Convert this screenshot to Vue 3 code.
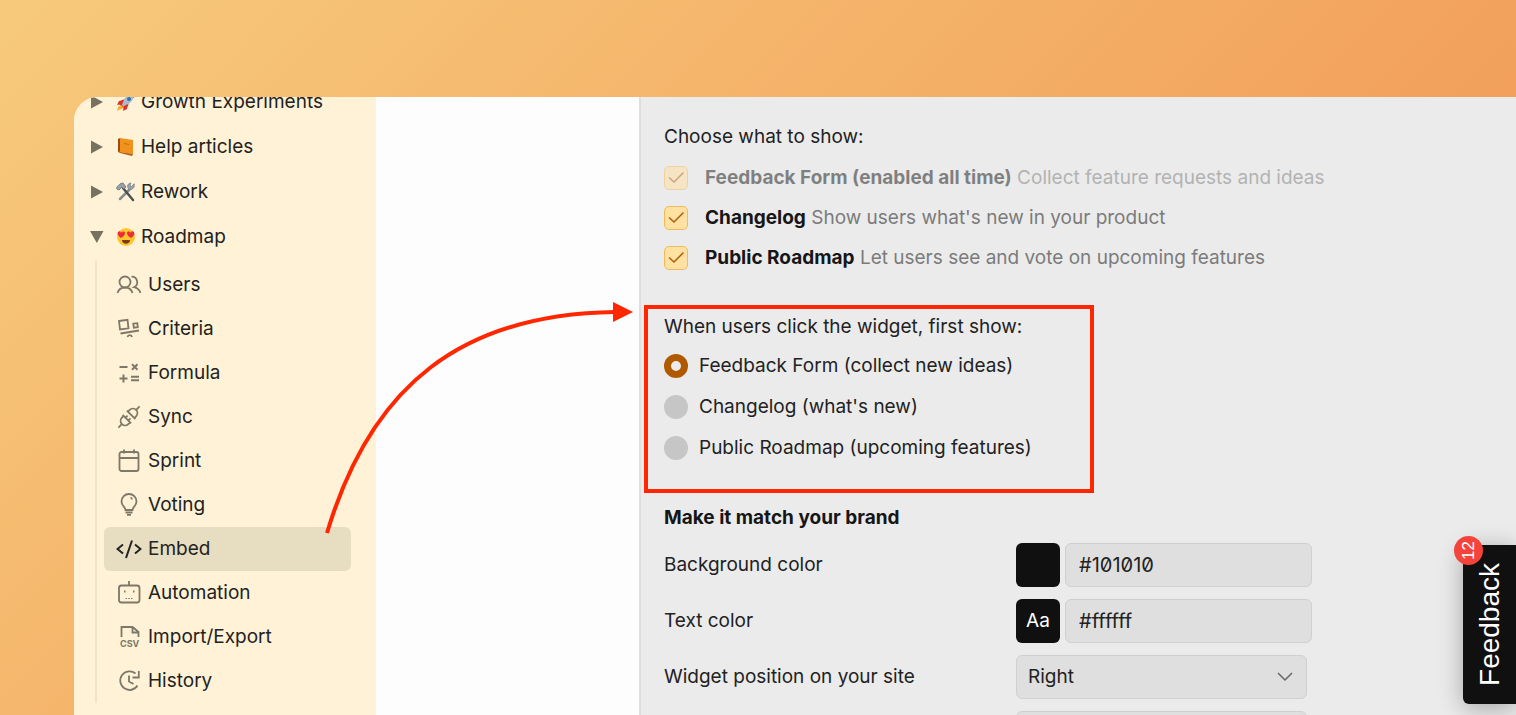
<script setup>
import { ref } from 'vue'

const spaces = [
  { name: 'Growth Experiments', icon: 'rocket' },
  { name: 'Help articles', icon: 'book' },
  { name: 'Rework', icon: 'tools' },
  { name: 'Roadmap', icon: 'eyes', open: true }
]
const pages = [
  { name: 'Users', icon: 'users' },
  { name: 'Criteria', icon: 'criteria' },
  { name: 'Formula', icon: 'formula' },
  { name: 'Sync', icon: 'sync' },
  { name: 'Sprint', icon: 'sprint' },
  { name: 'Voting', icon: 'voting' },
  { name: 'Embed', icon: 'embed', active: true },
  { name: 'Automation', icon: 'automation' },
  { name: 'Import/Export', icon: 'csv' },
  { name: 'History', icon: 'history' }
]
const sections = ref([
  { name: 'Feedback Form (enabled all time)', note: 'Collect feature requests and ideas', on: true, locked: true },
  { name: 'Changelog', note: "Show users what's new in your product", on: true },
  { name: 'Public Roadmap', note: 'Let users see and vote on upcoming features', on: true }
])
const starts = ['Feedback Form (collect new ideas)', "Changelog (what's new)", 'Public Roadmap (upcoming features)']
const start = ref(starts[0])
const background = ref('#101010')
const textColor = ref('#ffffff')
const position = ref('Right')
</script>

<template>
  <div class="page">
    <div class="window">
      <nav class="sidebar">
        <a v-for="s in spaces" :key="s.name" href="#" class="space">
          <svg class="caret" viewBox="0 0 14 14">
            <path v-if="s.open" d="M0 1h13.500L6.800 13z" />
            <path v-else d="M1 .5v13L13 7z" />
          </svg>
          <svg class="emoji" viewBox="0 0 20 20">
            <g v-if="s.icon === 'rocket'">
              <path d="M3 12l3-4 4-1 3 3-1 4-4 3z" fill="#d8322a" />
              <path d="M6 13C7 6 12 2 19 1c-1 7-5 11-11 14z" fill="#a9bccb" />
              <path d="M14 2l5-1-1 5z" fill="#e0382c" />
              <path d="M8 8L3 9l-2 4 5-1zM12 12l-1 5-4 2 1-5z" fill="#d8322a" />
              <circle cx="13" cy="7" r="2" fill="#2a72b8" />
              <path d="M5 13l3 3-3 1-4 2 1-4z" fill="#fcae2c" />
            </g>
            <g v-else-if="s.icon === 'book'">
              <path d="M2 2l2-1v15l-2-1z" fill="#9b4c12" />
              <path d="M3 15l12 3 2-1-12-3z" fill="#efe3cf" />
              <path d="M4 1l13 2v14L4 15z" fill="#f0921b" />
              <path d="M4 15v1l12 3 1-2z" fill="#b35a10" />
              <path d="M8 6l5 1v1L8 7z" fill="#c96d10" />
            </g>
            <g v-else-if="s.icon === 'tools'" fill="none" stroke-linecap="round">
              <path d="M4 17L14 7" stroke="#858b93" stroke-width="2.500" />
              <path d="M18 2l-3 3-1-2 1-2c-3 0-4 3-3 5s5 2 6-1z" fill="#9da3aa" stroke="#858b93" />
              <path d="M7 6l10 12" stroke="#4c5057" stroke-width="2.500" />
              <path d="M1 7l2 1 3-3 2 2 2-2-3-4C4 1 3 3 1 5z" fill="#9aa0a8" stroke="#777d85" />
            </g>
            <g v-else>
              <circle cx="10" cy="10" r="9" fill="#fdc62f" />
              <path d="M6 13h8c0 5-8 5-8 0z" fill="#7a3a12" />
              <path d="M5 11C2 9 1 7 2 5c1-1 3-1 3 1 1-2 4-2 4 0 0 2-2 4-4 5zM15 11c-2-1-4-3-4-5 0-2 3-2 4 0 0-2 2-2 3-1 1 2 0 4-3 6z" fill="#ee2b3b" />
            </g>
          </svg>
          <span>{{ s.name }}</span>
        </a>
        <div class="pages">
          <a v-for="p in pages" :key="p.name" href="#" class="entry" :class="{ active: p.active }">
            <svg class="icon" viewBox="0 0 26 26">
              <g v-if="p.icon === 'users'">
                <circle cx="9" cy="10" r="5.500" />
                <path d="M1.500 21c1-3.500 4-5.500 7.500-5.500s6.500 2 7.500 5.500M15.500 4.700a5.500 5.500 0 0 1 2.500 10.500c3.500.8 5.500 2.800 6.500 5.800" />
              </g>
              <g v-else-if="p.icon === 'criteria'">
                <path d="M3 5l8.500-1.200 1 8.500-8.500 1.200zM17.300 7.700l4-.5.500 4-4 .5zM4.500 17.500l18.500-3M11.500 21c.5-2.500 4-2.500 4.500 0" />
              </g>
              <g v-else-if="p.icon === 'formula'" class="bold">
                <path d="M3.500 7h8M16 4.200l5.500 5.500m0-5.500L16 9.700M3.500 18.500h8M7.500 14.500v8M15 16.800h8M15 20.200h8" />
              </g>
              <g v-else-if="p.icon === 'sync'">
                <path
                  transform="rotate(-45 13 13)"
                  d="M-2 13h4.500M10 7v12M10 8.500H7.500a4.500 4.500 0 0 0 0 9H10M10 11h3M10 15h3M28 13h-4.500M16 7v12M16 8.500h2.500a4.500 4.500 0 0 1 0 9H16"
                />
              </g>
              <g v-else-if="p.icon === 'sprint'">
                <rect x="3.500" y="4" width="19" height="19" rx="2" /><path d="M3.500 10h19M8 1.500v4M18 1.500v4" />
              </g>
              <g v-else-if="p.icon === 'voting'">
                <path d="M9.500 18c0-3-4-4-4-8.500a7.500 7.500 0 0 1 15 0c0 4.500-4 5.500-4 8.500zM9.500 20.500h7M11 22.800h4M14.500 5.500a2 2 0 0 1 1.500 2" />
              </g>
              <g v-else-if="p.icon === 'embed'">
                <path d="M7 8.500L1.500 13 7 17.500M19 8.500l5.500 4.500-5.500 4.500M16 4.500L10 22" />
              </g>
              <g v-else-if="p.icon === 'automation'">
                <rect x="3" y="5.500" width="20.500" height="17" rx="2.500" /><path d="M13 1v4.500M8 11.500h1.500M17 11.500h1.500" />
                <path class="fine" d="M9.500 18.500H11M12.300 18.500h1.500M15 18.500h1.500" />
              </g>
              <g v-else-if="p.icon === 'csv'">
                <path d="M5.500 13V3h11l6 5v5M16.500 3v5.500h6" />
                <text x="4" y="23">CSV</text>
              </g>
              <g v-else>
                <path d="M19.500 5.500a9.300 9.300 0 1 0 2 12M22.800 3v6.500h-6.300M13 7.500v6l4.500 2.500" />
              </g>
            </svg>
            <span>{{ p.name }}</span>
          </a>
        </div>
      </nav>

      <div class="gutter"></div>

      <main class="settings">
        <p class="line">Choose what to show:</p>
        <label v-for="s in sections" :key="s.name" class="check" :class="{ locked: s.locked }">
          <span class="tick">
            <input v-model="s.on" type="checkbox" :disabled="s.locked" />
            <svg v-if="s.on" viewBox="0 0 24 24"><path d="M5 11.500l5 4.500 9.500-9.500" /></svg>
          </span>
          <span><b>{{ s.name }}</b> <span class="note">{{ s.note }}</span></span>
        </label>

        <div class="highlight" role="radiogroup" aria-labelledby="first">
          <p id="first" class="question">When users click the widget, first show:</p>
          <label v-for="s in starts" :key="s" class="choice">
            <input v-model="start" type="radio" name="start" :value="s" />
            <span>{{ s }}</span>
          </label>
        </div>

        <h2>Make it match your brand</h2>
        <div class="field">
          <label for="bg">Background color</label>
          <span class="swatch"></span>
          <input id="bg" v-model="background" type="text" />
        </div>
        <div class="field">
          <label for="fg">Text color</label>
          <span class="swatch">Aa</span>
          <input id="fg" v-model="textColor" type="text" />
        </div>
        <div class="field">
          <label for="position">Widget position on your site</label>
          <span class="select">
            <select id="position" v-model="position"><option>Right</option><option>Left</option></select>
            <svg viewBox="0 0 16 10"><path d="M1 1l7 7 7-7" /></svg>
          </span>
        </div>
        <div class="field">
          <span class="label"></span>
          <span class="select"><select aria-label="Widget style"></select></span>
        </div>
      </main>

      <svg class="arrow" viewBox="0 0 310 236">
        <path class="curve" d="M3 233C47 85 138 14 291 12" />
        <path class="head" d="M289 2v20l20-10z" />
      </svg>
    </div>

    <button class="feedback" type="button">
      <span class="turned">Feedback</span>
      <span class="badge"><span class="turned">12</span></span>
    </button>
  </div>
</template>

<style>
body {
  margin: 0;
}
</style>

<style scoped>
* {
  box-sizing: border-box;
}
.page {
  position: relative;
  display: flex;
  height: 100vh;
  padding: 97px 0 0 74px;
  overflow: hidden;
  background: linear-gradient(135deg, #f7ca7b, #f19855 85%);
  color: #222;
  font: 19px/24px Inter, "Liberation Sans", sans-serif;
}
.window {
  position: relative;
  display: flex;
  flex: 1;
  overflow: hidden;
  border-top-left-radius: 24px;
  background: #fdfdfd;
}
.sidebar {
  width: 302px;
  flex: none;
  margin-top: -18px;
  background: #fff2d6;
}
.space {
  display: flex;
  align-items: center;
  height: 45px;
  padding-left: 16px;
  color: inherit;
  text-decoration: none;
}
.caret {
  width: 14px;
  height: 14px;
  fill: #77725f;
}
.emoji {
  width: 20px;
  height: 20px;
  margin: 0 5px 0 12px;
}
.pages {
  margin: 1px 25px 0 21px;
  padding: 3px 0 0 7px;
  border-left: 2px solid #eee4c8;
}
.entry {
  display: flex;
  align-items: center;
  gap: 6px;
  height: 44px;
  padding-left: 12px;
  border-radius: 6px;
  color: inherit;
  text-decoration: none;
}
.entry.active {
  background: #e7dec1;
}
.icon {
  width: 26px;
  height: 26px;
  fill: none;
  stroke: #7d7868;
  stroke-width: 1.8;
}
.icon .bold {
  stroke-width: 2;
}
.icon .fine {
  stroke-width: 1.2;
}
.active .icon {
  stroke: #222;
  stroke-width: 2;
}
.icon text {
  fill: #7d7868;
  stroke: none;
  font-size: 9px;
  font-weight: 700;
}
.gutter {
  width: 263px;
  flex: none;
}
.settings {
  flex: 1;
  min-width: 0;
  padding: 20px 20px 0 23px;
  border-left: 2px solid #dedede;
  background: #ebebeb;
}
.line {
  height: 40px;
  margin: 0 0 1px;
  line-height: 40px;
}
.check {
  display: flex;
  align-items: center;
  gap: 17px;
  height: 40px;
  white-space: nowrap;
}
.check b {
  color: #161616;
}
.note {
  color: #7b7b7b;
}
.locked {
  opacity: 0.5;
}
.tick {
  position: relative;
  width: 24px;
  height: 24px;
}
.tick input {
  appearance: none;
  display: block;
  width: 24px;
  height: 24px;
  margin: 0;
  border: 1px solid #f3b95f;
  border-radius: 5px;
  background: #ffe1a1;
}
.tick svg {
  position: absolute;
  inset: 0;
  fill: none;
  stroke: #b45d08;
  stroke-width: 1.5;
  pointer-events: none;
}
.highlight {
  width: 450px;
  height: 188px;
  margin: 27px 0 0 -20px;
  padding: 0 16px;
  border: 4px solid #ff2600;
}
.question {
  margin: 0;
  line-height: 36px;
}
.choice {
  display: flex;
  align-items: center;
  gap: 11px;
  height: 41px;
}
.choice input {
  appearance: none;
  width: 24px;
  height: 24px;
  margin: 0;
  border-radius: 50%;
  background: #c6c6c6;
}
.choice input:checked {
  border: 7px solid #b05a00;
  background: #ebebeb;
}
h2 {
  margin: 13px 0;
  color: #161616;
  font-size: 19px;
  line-height: 24px;
}
.field {
  display: flex;
  align-items: center;
  height: 44px;
  margin-bottom: 12px;
}
.field label,
.label {
  width: 352px;
}
.swatch {
  width: 44px;
  height: 44px;
  margin-right: 5px;
  border-radius: 6px;
  background: #101010;
  color: #fff;
  line-height: 44px;
  text-align: center;
}
.field input,
select {
  width: 247px;
  height: 44px;
  padding: 0 13px;
  border: 1px solid #d0d0d0;
  border-radius: 6px;
  background: #dfdfdf;
  color: inherit;
  font: inherit;
}
.field input {
  font-size: 20px;
  font-variant-numeric: slashed-zero;
}
.select {
  position: relative;
}
.select select {
  display: block;
  width: 291px;
  padding: 0 11px;
  appearance: none;
}
.select svg {
  position: absolute;
  top: 17px;
  right: 14px;
  width: 16px;
  height: 10px;
  fill: none;
  stroke: #666;
  stroke-width: 1.5;
  pointer-events: none;
}
.arrow {
  position: absolute;
  top: 203px;
  left: 250px;
  width: 310px;
  height: 236px;
  fill: #ff2600;
  pointer-events: none;
}
.curve {
  fill: none;
  stroke: #ff2600;
  stroke-width: 4;
}
.feedback {
  position: absolute;
  right: 0;
  bottom: 11px;
  display: flex;
  align-items: center;
  justify-content: center;
  width: 53px;
  height: 159px;
  padding: 0;
  border: 0;
  border-radius: 6px 0 0 6px;
  background: #101010;
  box-shadow: 0 4px 24px rgba(0, 0, 0, 0.3);
  color: #fff;
  font: 28px/32px "Liberation Sans", sans-serif;
}
.turned {
  writing-mode: vertical-rl;
  transform: rotate(180deg);
}
.badge {
  position: absolute;
  top: -9px;
  left: -9px;
  display: flex;
  align-items: center;
  justify-content: center;
  width: 29px;
  height: 29px;
  border-radius: 50%;
  background: #f4433a;
  font-size: 17px;
}
</style>
